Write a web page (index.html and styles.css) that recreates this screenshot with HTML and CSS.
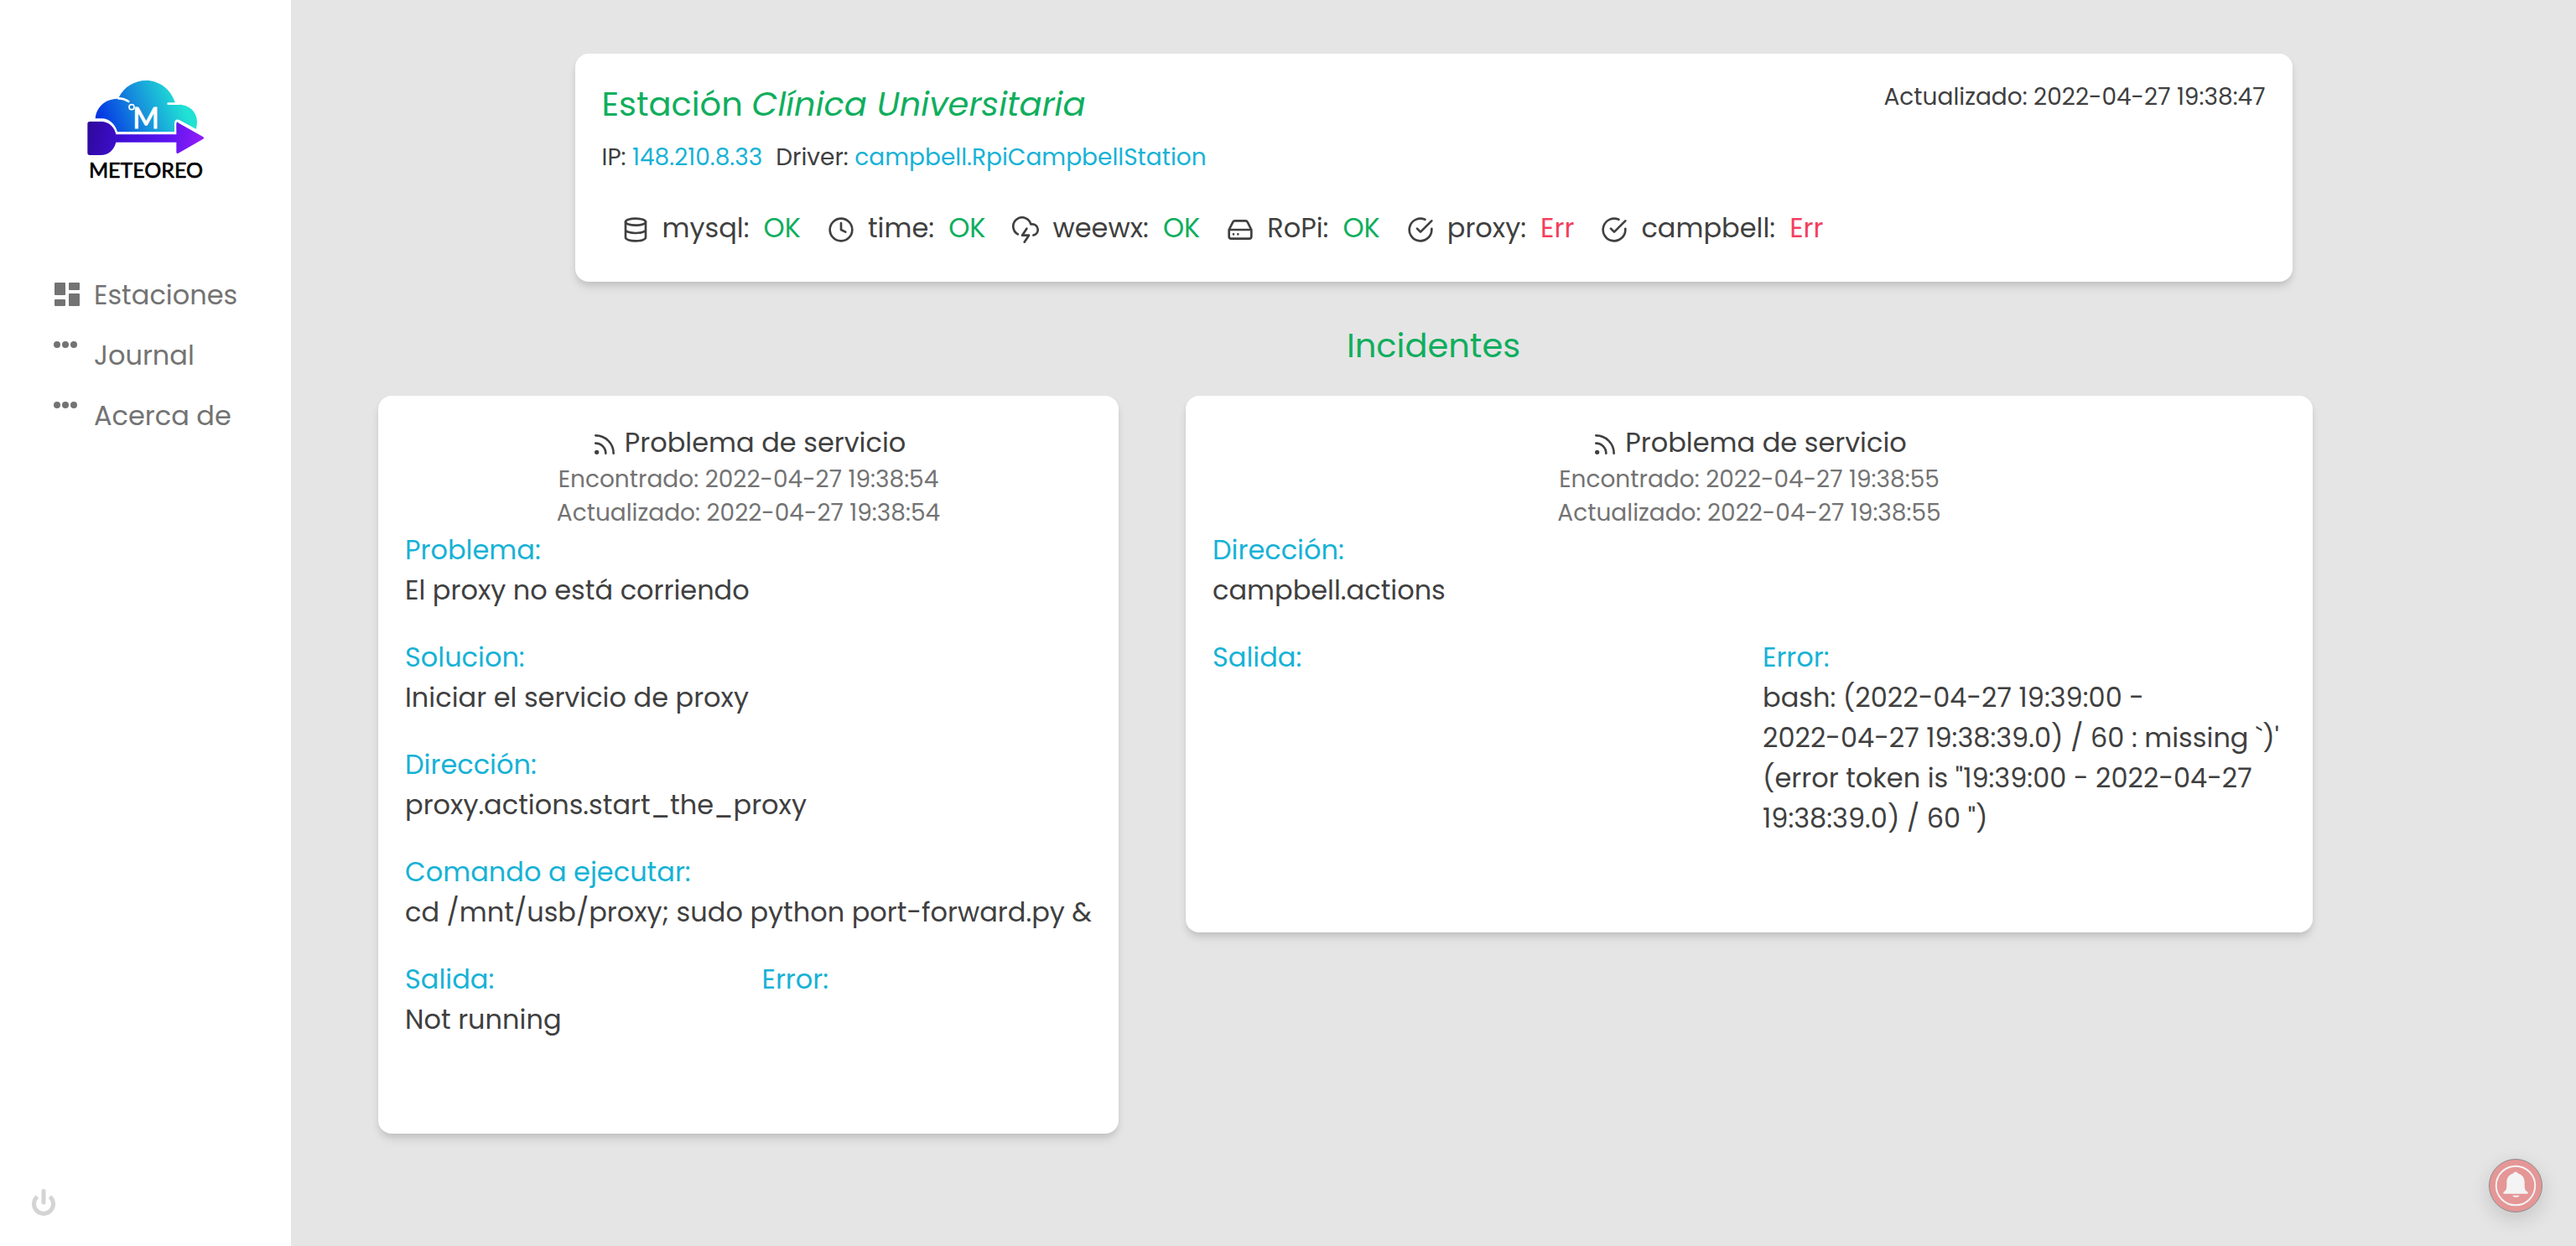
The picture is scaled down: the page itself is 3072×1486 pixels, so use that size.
FILE: index.html
```html
<!DOCTYPE html>
<html lang="es">
<head>
<meta charset="utf-8">
<meta name="viewport" content="width=device-width, initial-scale=1">
<title>Meteoreo</title>
<link rel="stylesheet" href="styles.css">
</head>
<body>
<svg class="symbols" aria-hidden="true">
  <symbol id="i-database" viewBox="0 0 24 24"><ellipse cx="12" cy="5" rx="9" ry="3"/><path d="M21 12c0 1.66-4 3-9 3s-9-1.340-9-3M3 5v14c0 1.660 4 3 9 3s9-1.340 9-3V5"/></symbol>
  <symbol id="i-clock" viewBox="0 0 24 24"><circle cx="12" cy="12" r="10"/><path d="M12 6v6l4 2"/></symbol>
  <symbol id="i-storm" viewBox="0 0 24 24"><path d="M19 16.900A5 5 0 0 0 18 7h-1.260a8 8 0 1 0-11.620 9M13 11l-4 6h6l-4 6"/></symbol>
  <symbol id="i-drive" viewBox="0 0 24 24"><path d="M22 12H2M5.450 5.110L2 12v6a2 2 0 0 0 2 2h16a2 2 0 0 0 2-2v-6l-3.450-6.890A2 2 0 0 0 16.760 4H7.240a2 2 0 0 0-1.790 1.110zM6 16h.01M10 16h.01"/></symbol>
  <symbol id="i-check" viewBox="0 0 24 24"><path d="M22 11.080V12a10 10 0 1 1-5.930-9.140M22 4L12 14.010l-3-3"/></symbol>
  <symbol id="i-rss" viewBox="0 0 24 24"><path d="M4 11a9 9 0 0 1 9 9M4 4a16 16 0 0 1 16 16"/><circle cx="5" cy="19" r="1"/></symbol>
  <symbol id="i-dots" viewBox="0 0 28 8"><circle cx="4" cy="4" r="4"/><circle cx="14" cy="4" r="4"/><circle cx="24" cy="4" r="4"/></symbol>
</svg>
<div class="app">
  <aside class="sidebar">
    <svg class="logo" viewBox="0 0 570 450" role="img" aria-label="Meteoreo">
      <defs>
        <linearGradient id="cloud" gradientUnits="userSpaceOnUse" x1="125" y1="215" x2="400" y2="100"><stop offset="0" stop-color="#0433e4"/><stop offset=".5" stop-color="#168fdc"/><stop offset="1" stop-color="#20e2d4"/></linearGradient>
        <linearGradient id="arrow" gradientUnits="userSpaceOnUse" x1="90" y1="200" x2="470" y2="290"><stop offset="0" stop-color="#3009a0"/><stop offset=".35" stop-color="#430fdc"/><stop offset=".7" stop-color="#5a14ee"/><stop offset="1" stop-color="#8f1cf8"/></linearGradient>
      </defs>
      <path fill="url(#cloud)" d="M101 186C104 142 138 114 178 114L186 107C203 72 240 48 283 48C330 48 372 80 386 126L400 134C436 134 465 160 465 196Q465 210 461 223L400 189L388 233H178C168 208 150 188 120 186Z"/>
      <path class="logo-gap" d="M184 112Q204 112 220 123M362 131H402M101 188H124C150 188 170 208 177 236H388V202Q388 188 400 193L464 228"/>
      <path fill="url(#arrow)" d="M73 203Q73 195 81 195H122C150 195 170 215 175 241H391V203Q391 195 399 200L487 250Q492 254 487 257L398 308Q391 312 391 304V269H175C167 298 148 315 120 315H81Q73 315 73 307Z"/>
      <circle class="logo-degree" cx="231" cy="143" r="9"/>
      <text class="logo-m" x="282" y="218">M</text>
      <text class="logo-name" x="282" y="396">METEOREO</text>
    </svg>
    <nav class="nav">
      <a class="nav-link" href="#estaciones"><svg class="nav-icon" viewBox="0 0 32 32"><path d="M2 3h11v13H2zM19 3h11v7H19zM2 23h11v6H2zM19 16h11v13H19z" stroke-width="2" stroke="currentColor" stroke-linejoin="round"/></svg>Estaciones</a>
      <a class="nav-link" href="#journal"><svg class="nav-dots"><use href="#i-dots"/></svg>Journal</a>
      <a class="nav-link" href="#acerca"><svg class="nav-dots"><use href="#i-dots"/></svg>Acerca de</a>
    </nav>
    <button class="power" type="button" aria-label="Salir"><svg viewBox="0 0 28 32"><path d="M14 2.500V16" stroke-width="5"/><path d="M6.500 9.200A11.500 11.500 0 1 0 21.500 9.200" stroke-width="5" stroke-linecap="butt"/></svg></button>
  </aside>
  <main class="main">
    <section class="card station">
      <div class="station-top">
        <h1 class="title">Estación <em>Clínica Universitaria</em></h1>
        <p class="small">Actualizado: 2022-04-27 19:38:47</p>
      </div>
      <p class="small meta"><span>IP: <span class="info">148.210.8.33</span></span><span>Driver: <span class="info">campbell.RpiCampbellStation</span></span></p>
      <ul class="services">
        <li><svg class="icon"><use href="#i-database"/></svg><span>mysql: &nbsp;<span class="ok">OK</span></span></li>
        <li><svg class="icon"><use href="#i-clock"/></svg><span>time: &nbsp;<span class="ok">OK</span></span></li>
        <li><svg class="icon"><use href="#i-storm"/></svg><span>weewx: &nbsp;<span class="ok">OK</span></span></li>
        <li><svg class="icon"><use href="#i-drive"/></svg><span>RoPi: &nbsp;<span class="ok">OK</span></span></li>
        <li><svg class="icon"><use href="#i-check"/></svg><span>proxy: &nbsp;<span class="err">Err</span></span></li>
        <li><svg class="icon"><use href="#i-check"/></svg><span>campbell: &nbsp;<span class="err">Err</span></span></li>
      </ul>
    </section>
    <h2 class="title incidents-title">Incidentes</h2>
    <div class="incidents">
      <article class="card incident">
        <header class="incident-head">
          <h3><svg class="icon"><use href="#i-rss"/></svg>Problema de servicio</h3>
          <p class="small">Encontrado: 2022-04-27 19:38:54</p>
          <p class="small">Actualizado: 2022-04-27 19:38:54</p>
        </header>
        <dl class="fields">
          <div class="wide"><dt>Problema:</dt><dd>El proxy no está corriendo</dd></div>
          <div class="wide"><dt>Solucion:</dt><dd>Iniciar el servicio de proxy</dd></div>
          <div class="wide"><dt>Dirección:</dt><dd>proxy.actions.start_the_proxy</dd></div>
          <div class="wide"><dt>Comando a ejecutar:</dt><dd>cd /mnt/usb/proxy; sudo python port-forward.py &amp;</dd></div>
          <div><dt>Salida:</dt><dd>Not running</dd></div>
          <div><dt>Error:</dt><dd></dd></div>
        </dl>
      </article>
      <article class="card incident incident-wide">
        <header class="incident-head">
          <h3><svg class="icon"><use href="#i-rss"/></svg>Problema de servicio</h3>
          <p class="small">Encontrado: 2022-04-27 19:38:55</p>
          <p class="small">Actualizado: 2022-04-27 19:38:55</p>
        </header>
        <dl class="fields">
          <div class="wide"><dt>Dirección:</dt><dd>campbell.actions</dd></div>
          <div><dt>Salida:</dt><dd></dd></div>
          <div><dt>Error:</dt><dd>bash: (2022-04-27 19:39:00 -<br>2022-04-27 19:38:39.0) / 60 : missing `)'<br>(error token is "19:39:00 - 2022-04-27<br>19:38:39.0) / 60 ")</dd></div>
        </dl>
      </article>
    </div>
  </main>
  <button class="alert" type="button" aria-label="Alertas">
    <svg viewBox="0 0 64 64"><circle cx="32" cy="32" r="24" fill="none" stroke="#f4f4f4" stroke-width="2"/><path d="M28 44a5 4 0 0 0 9 0z"/><path d="M32 15q2 0 3 2c6 2 8 6 8 11 0 8 0 9 4 12v2H17v-2c4-3 4-4 4-12 0-5 2-9 8-11q1-2 3-2z"/></svg>
  </button>
</div>
</body>
</html>
```
FILE: styles.css
```css
* { box-sizing: border-box; margin: 0; padding: 0; }

body {
  background: #e5e5e5;
  color: #404040;
  font: 32px/48px Poppins, Inter, sans-serif;
}

.symbols { display: none; }

.app { display: flex; min-height: 100vh; }

/* Sidebar */
.sidebar {
  display: flex;
  flex-direction: column;
  flex: none;
  width: 347px;
  padding: 80px 0 36px;
  background: #fff;
}
.logo { width: 190px; height: 150px; margin-left: 80px; }
.logo-gap { fill: none; stroke: #fff; stroke-width: 8; stroke-linecap: round; }
.logo-degree { fill: none; stroke: #fff; stroke-width: 5; }
.logo-m, .logo-name { font-family: Lato, sans-serif; text-anchor: middle; stroke-linejoin: round; }
.logo-m { font-size: 102px; fill: #fff; stroke: #fff; stroke-width: 3; }
.logo-name { font-size: 75px; fill: #000; stroke: #000; stroke-width: 2; }

.nav { display: flex; flex-direction: column; gap: 24px; margin-top: 98px; padding-left: 64px; }
.nav-link { display: flex; align-items: flex-start; color: #737373; text-decoration: none; }
.nav-icon { width: 32px; height: 32px; margin: 7px 16px 0 0; fill: currentColor; }
.nav-dots { width: 28px; height: 8px; margin: 7px 20px 0 0; fill: currentColor; }

button { border: 0; background: none; font: inherit; cursor: pointer; }
.power { width: 28px; height: 32px; margin: auto 0 0 38px; }
.power svg { display: block; width: 28px; height: 32px; fill: none; stroke: #d4d4d4; stroke-linecap: round; }

/* Content */
.main { flex: 1; min-width: 0; padding: 64px 0; }
.card {
  padding: 32px;
  border-radius: 16px;
  background: #fff;
  box-shadow: 0 8px 12px -2px rgba(0, 0, 0, .1), 0 4px 8px -2px rgba(0, 0, 0, .1);
}
.title { color: #0fae5e; font-size: 40px; font-weight: 400; line-height: 56px; }
.small { font-size: 28px; line-height: 40px; }
.info { color: #17b2d6; }
.ok { color: #0fae5e; }
.err { color: #f43f5e; }
.icon {
  flex: none;
  width: 32px;
  height: 32px;
  margin-top: 4px;
  fill: none;
  stroke: currentColor;
  stroke-width: 2;
  stroke-linecap: round;
  stroke-linejoin: round;
}

.station { max-width: 2048px; margin: 0 auto; }
.station-top { display: flex; justify-content: space-between; }
.meta { display: flex; gap: 16px; margin-top: 16px; }
.services { display: flex; flex-wrap: wrap; gap: 32px; padding: 40px 24px 8px; list-style: none; }
.services li { display: flex; align-items: center; gap: 16px; }

.incidents-title { margin: 48px 0 32px; text-align: center; }
.incidents { display: flex; align-items: flex-start; gap: 80px; margin: 0 104px; }
.incident { flex: 0 1 883px; padding-bottom: 112px; }
.incident-wide { flex-basis: 1344px; }
.incident-head { color: #737373; text-align: center; }
.incident-head h3 {
  display: flex;
  align-items: center;
  justify-content: center;
  gap: 8px;
  color: #404040;
  font-size: 32px;
  font-weight: 400;
}
.fields { display: grid; grid-template-columns: 1fr 1fr; gap: 32px; }
.fields > div { min-width: 0; }
.fields .wide { grid-column: 1 / -1; }
.fields dt { color: #17b2d6; }

/* Floating alert button */
.alert {
  position: fixed;
  right: 40px;
  bottom: 40px;
  width: 64px;
  height: 64px;
  border: 1px solid #8c8c8c;
  border-radius: 50%;
  background: #e59696;
  box-shadow: 0 8px 24px rgba(0, 0, 0, .14);
}
.alert svg { display: block; width: 62px; height: 62px; fill: #f4f4f4; }
```
